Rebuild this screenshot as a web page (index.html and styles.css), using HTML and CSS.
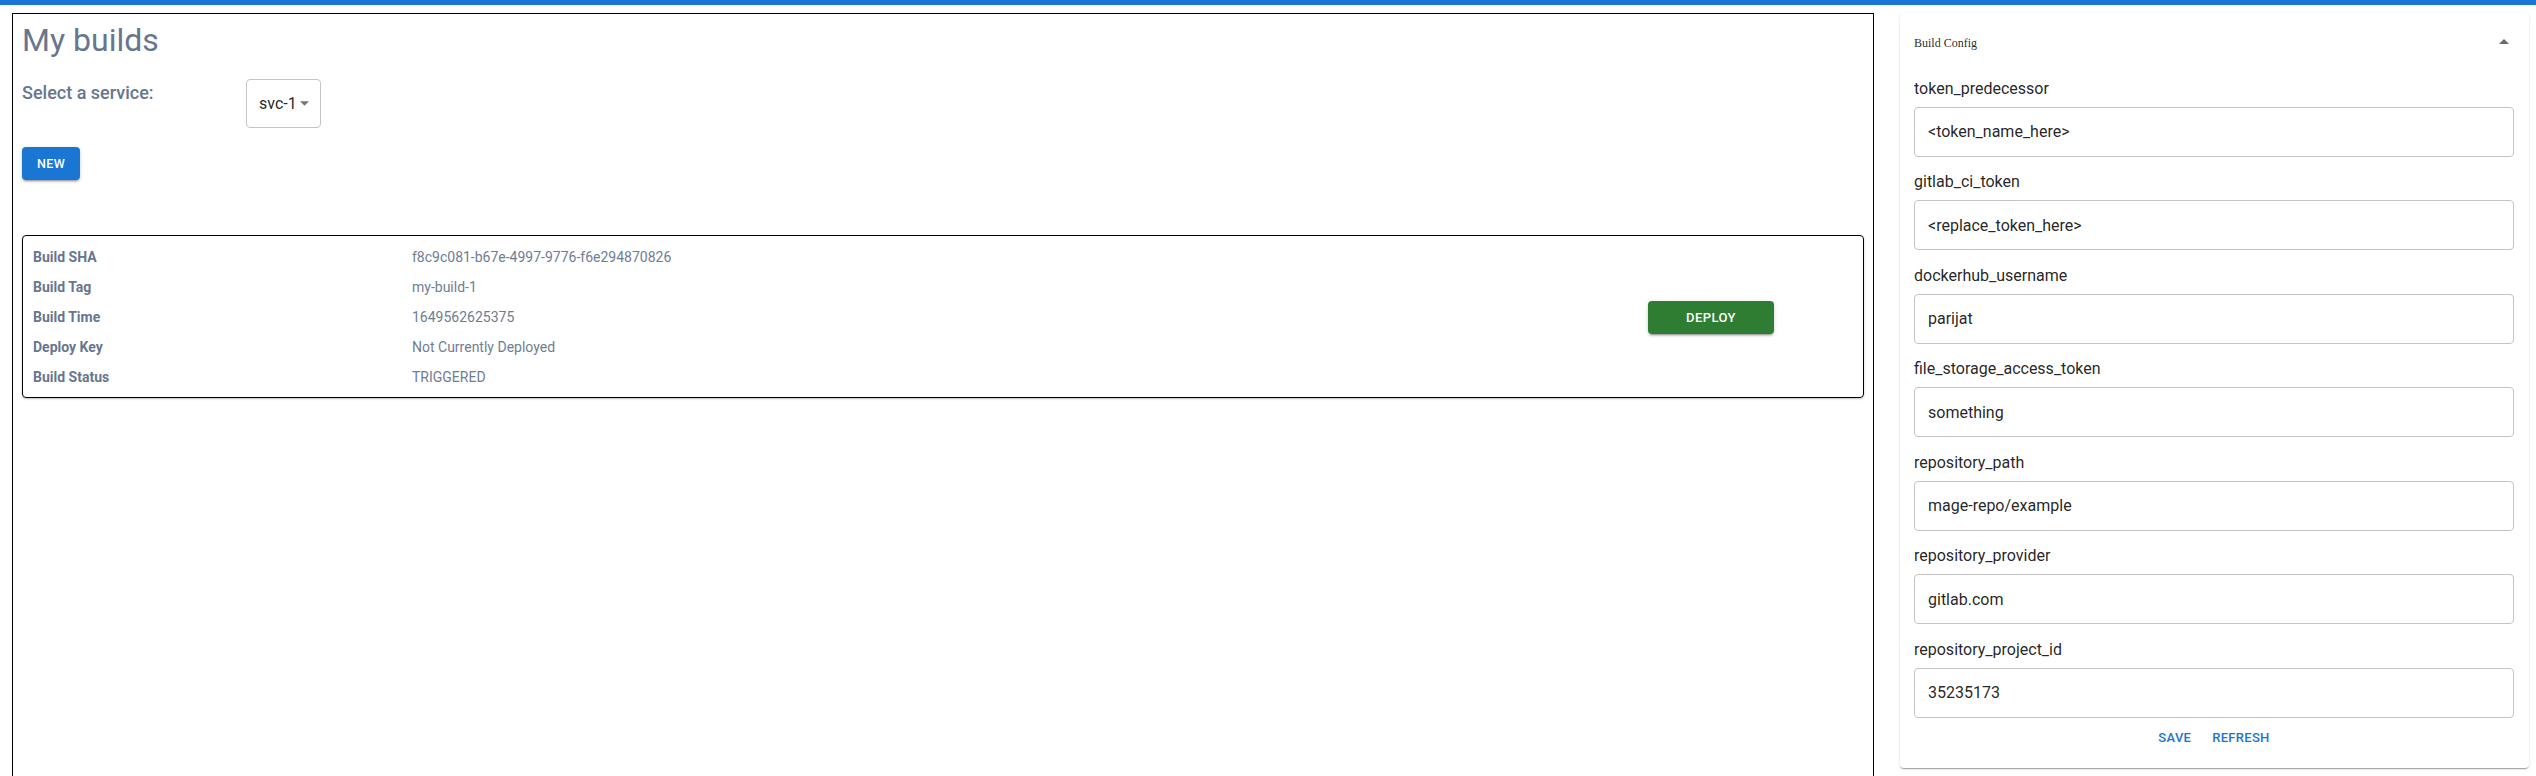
FILE: index.html
```html
<!DOCTYPE html>
<html lang="en">
<head>
<meta charset="utf-8">
<title>My builds</title>
<link rel="stylesheet" href="styles.css">
</head>
<body>
<div class="topbar"></div>
<div class="layout">
  <main class="builds">
    <h1 class="title">My builds</h1>
    <div class="service-row">
      <span class="service-label">Select a service:</span>
      <div class="select">
        <span class="select-value">svc-1</span>
        <svg class="select-arrow" width="10" height="5" viewBox="0 0 10 5"><path d="M0 0l5 5 5-5z" fill="rgba(0,0,0,0.54)"/></svg>
      </div>
    </div>
    <button class="btn btn-new">NEW</button>
    <section class="build-card">
      <div class="build-info">
        <span class="k">Build SHA</span><span class="v">f8c9c081-b67e-4997-9776-f6e294870826</span>
        <span class="k">Build Tag</span><span class="v">my-build-1</span>
        <span class="k">Build Time</span><span class="v">1649562625375</span>
        <span class="k">Deploy Key</span><span class="v">Not Currently Deployed</span>
        <span class="k">Build Status</span><span class="v">TRIGGERED</span>
      </div>
      <button class="btn btn-deploy">DEPLOY</button>
    </section>
  </main>
  <aside class="config">
    <div class="config-head">
      <span class="config-title">Build Config</span>
      <svg class="config-arrow" width="10" height="5" viewBox="0 0 10 5"><path d="M0 5l5-5 5 5z" fill="#6b6b6b"/></svg>
    </div>
    <div class="config-body">
      <div class="field"><label>token_predecessor</label><div class="input">&lt;token_name_here&gt;</div></div>
      <div class="field"><label>gitlab_ci_token</label><div class="input">&lt;replace_token_here&gt;</div></div>
      <div class="field"><label>dockerhub_username</label><div class="input">parijat</div></div>
      <div class="field"><label>file_storage_access_token</label><div class="input">something</div></div>
      <div class="field"><label>repository_path</label><div class="input">mage-repo/example</div></div>
      <div class="field"><label>repository_provider</label><div class="input">gitlab.com</div></div>
      <div class="field"><label>repository_project_id</label><div class="input">35235173</div></div>
    </div>
    <div class="config-actions">
      <button class="text-btn">SAVE</button>
      <button class="text-btn">REFRESH</button>
    </div>
  </aside>
</div>
</body>
</html>
```
FILE: styles.css
```css
html, body {
  margin: 0;
  padding: 0;
  overflow: hidden;
  background: #fff;
  font-family: Roboto, "Liberation Sans", Arial, sans-serif;
}

.topbar {
  height: 5px;
  background: #1976d2;
}

.layout {
  display: flex;
  align-items: flex-start;
  padding: 8px 7px 0 12px;
}

.builds {
  flex: 1;
  height: 780px;
  border: 1px solid #000;
  padding: 0 9px;
  box-sizing: border-box;
}

.title {
  margin: 8px 0 0 0;
  font-size: 32px;
  font-weight: 400;
  line-height: 37px;
  color: #67768f;
}

.service-row {
  display: flex;
  align-items: flex-start;
  margin-top: 20px;
}

.service-label {
  width: 224px;
  font-size: 18px;
  font-weight: 500;
  line-height: 28px;
  color: #67768f;
}

.select {
  display: flex;
  align-items: center;
  width: 75px;
  height: 49px;
  box-sizing: border-box;
  border: 1px solid #c4c4c4;
  border-radius: 4px;
  padding: 0 11px 0 12px;
}

.select-value {
  flex: 1;
  font-size: 16px;
  color: rgba(0, 0, 0, 0.87);
}

.select-arrow {
  display: block;
  width: 9px;
  height: 5px;
}

.btn {
  display: flex;
  align-items: center;
  justify-content: center;
  border: 0;
  border-radius: 4px;
  color: #fff;
  font-family: Roboto, "Liberation Sans", Arial, sans-serif;
  font-size: 13px;
  font-weight: 500;
  letter-spacing: 0.4px;
  box-shadow: 0 3px 1px -2px rgba(0,0,0,0.2), 0 2px 2px 0 rgba(0,0,0,0.14), 0 1px 5px 0 rgba(0,0,0,0.12);
  padding: 0;
}

.btn-new {
  margin-top: 19px;
  width: 58px;
  height: 33px;
  background: #1976d2;
  font-size: 12.5px;
}

.build-card {
  margin-top: 55px;
  display: flex;
  align-items: center;
  border: 1px solid #000;
  border-radius: 4px;
  padding: 6px 0 5px 10px;
  box-shadow: 0 1px 2px rgba(0,0,0,0.25);
}

.build-info {
  flex: 1;
  display: grid;
  grid-template-columns: 379px 1fr;
  grid-auto-rows: 30px;
  align-items: center;
  font-size: 14px;
  color: #67768f;
}

.build-info .k {
  font-weight: 700;
}

.build-info .v {
  color: #6f7d94;
}

.btn-deploy {
  width: 126px;
  height: 33px;
  margin-right: 89px;
  background: #2e7d32;
  font-size: 13px;
}

.config {
  width: 629px;
  margin-left: 26px;
  flex: none;
  border-radius: 4px;
  background: #fff;
  box-shadow: 0 2px 1px -1px rgba(0,0,0,0.2), 0 1px 1px 0 rgba(0,0,0,0.14), 0 1px 3px 0 rgba(0,0,0,0.12);
  padding: 0 15px 12px 14px;
  box-sizing: border-box;
}

.config-head {
  display: flex;
  align-items: center;
  justify-content: space-between;
  height: 60px;
}

.config-title {
  font-family: "Liberation Serif", "Times New Roman", serif;
  font-size: 12px;
  color: rgba(0, 0, 0, 0.87);
}

.config-arrow {
  display: block;
  margin-right: 5px;
  margin-top: -4px;
}

.config-body {
  display: flex;
  flex-direction: column;
  gap: 13.5px;
  padding-top: 3.5px;
}

.field label {
  display: block;
  font-size: 16px;
  line-height: 23px;
  color: rgba(0, 0, 0, 0.87);
  margin-bottom: 7px;
}

.input {
  height: 50px;
  box-sizing: border-box;
  border: 1px solid #c4c4c4;
  border-radius: 4px;
  padding: 0 13px;
  display: flex;
  align-items: center;
  font-size: 16px;
  color: rgba(0, 0, 0, 0.87);
}

.config-actions {
  display: flex;
  justify-content: center;
  gap: 21px;
  margin-top: 2px;
  height: 36px;
  align-items: center;
}

.text-btn {
  border: 0;
  background: none;
  padding: 0;
  color: #1976d2;
  font-family: Roboto, "Liberation Sans", Arial, sans-serif;
  font-size: 13px;
  font-weight: 500;
  letter-spacing: 0.3px;
}
```
